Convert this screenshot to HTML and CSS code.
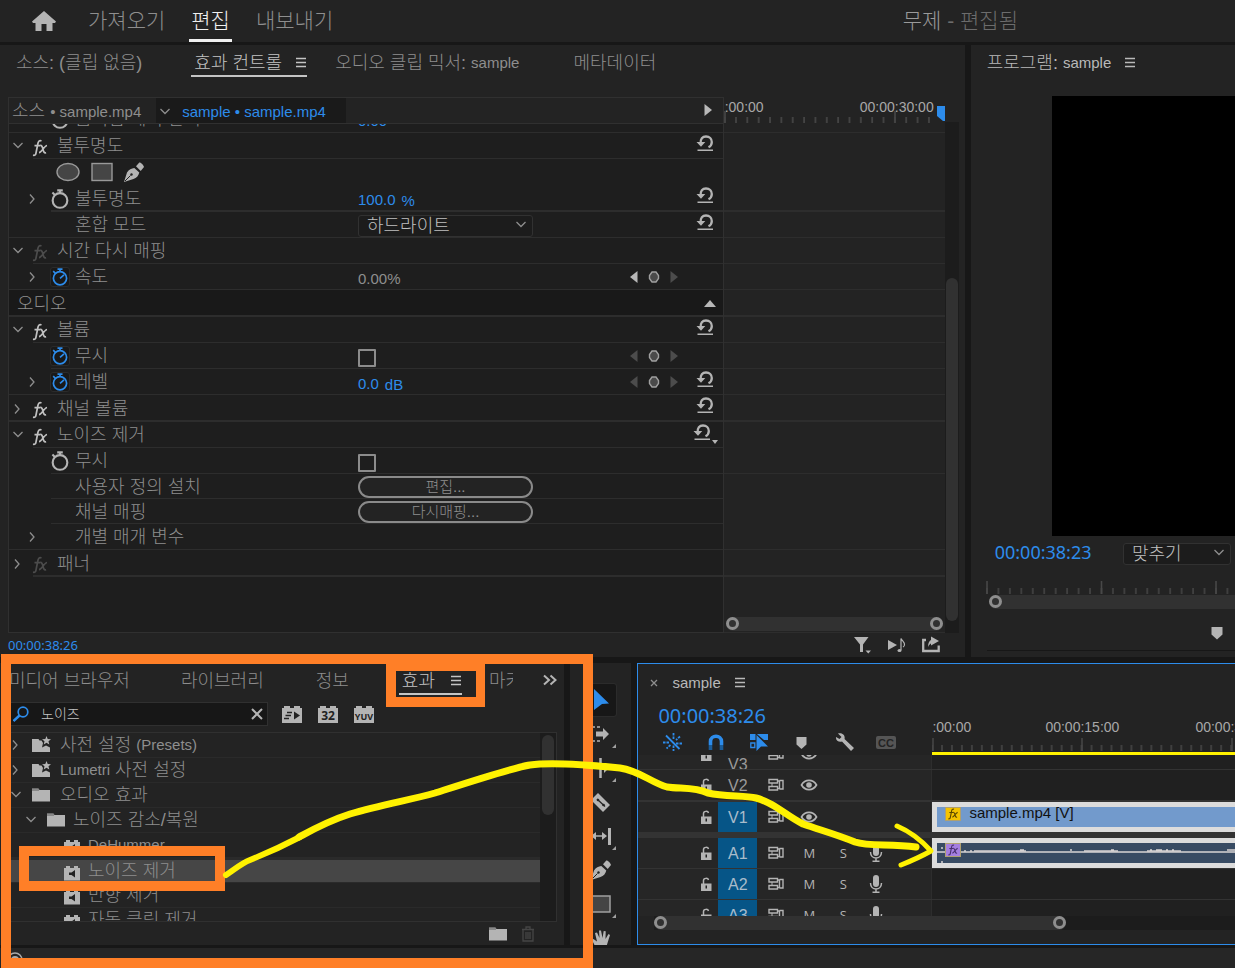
FILE: index.html
```html
<!DOCTYPE html>
<html lang="ko">
<head>
  <meta charset="UTF-8" />
  <meta name="viewport" content="width=device-width, initial-scale=1.0"/>
  <title>무제 - 편집됨</title>
  <link rel="stylesheet" href="styles.css">
</head>
<body>
  <!-- Icons -->
  <svg class="sprite" aria-hidden="true">
    <symbol id="i-down" viewBox="0 0 12 12"><path d="M1.500 3 6 7.500 10.500 3" fill="none" stroke="currentColor" stroke-width="1.300"/></symbol>
    <symbol id="i-right" viewBox="0 0 12 12"><path d="M3 1.500 7 6l-4 4.500" fill="none" stroke="currentColor" stroke-width="1.300"/></symbol>
    <symbol id="i-menu" viewBox="0 0 12 12"><path d="M1 1.500h10M1 5.500h10M1 9.500h10" stroke="currentColor" stroke-width="1.300"/></symbol>
    <symbol id="i-fx" viewBox="0 0 16 18"><path d="M9.500 2C7.300 1 6.300 2.500 5.900 4.500L4 14c-.3 1.800-1 2.600-3 2.200M2.500 6.700h5.600M8.200 6.500c1.700-.4 2.100 1 2.700 3.200.6 2.800 1.100 4.600 3.200 4M15 6.500c-2.300.3-5.600 6.900-8 7.200" fill="none" stroke="currentColor" stroke-width="1.700"/></symbol>
    <symbol id="i-watch" viewBox="0 0 18 18"><circle cx="9" cy="10.300" r="6.600" fill="none" stroke="currentColor" stroke-width="1.900"/><path d="M6.500 1.200h5M9 1v3M2.200 3.200l2.200 2.100" fill="none" stroke="currentColor" stroke-width="1.900"/></symbol>
    <symbol id="i-watch-on" viewBox="0 0 18 18"><circle cx="9" cy="10.300" r="6.600" fill="none" stroke="currentColor" stroke-width="1.700"/><path d="M6.500 1.200h5M9 1v3M2.200 3.200l2.200 2.100M9 10.300l4-3.500" fill="none" stroke="currentColor" stroke-width="1.700"/></symbol>
    <symbol id="i-reset" viewBox="0 0 18 17"><path d="M4.700 8.500C4.200 4 6.500 1.500 10 1.500c3.500 0 5.800 2.300 5.800 5.500 0 2.400-1 4.200-3.300 5.300" fill="none" stroke="currentColor" stroke-width="2.300"/><path d="M.5 7h8.800L5 11.800zM1.500 14.500h15.500V16H1.500z" fill="currentColor"/></symbol>
    <symbol id="i-prev" viewBox="0 0 10 14"><path d="M8.500 1v12L1 7z" fill="currentColor"/></symbol>
    <symbol id="i-next" viewBox="0 0 10 14"><path d="M1.500 1v12L9 7z" fill="currentColor"/></symbol>
    <symbol id="i-key" viewBox="0 0 12 14"><path d="M4 2h4l2.500 3.500v3L8 12H4L1.500 8.500v-3z" fill="#4a4a4a" stroke="#a0a0a0" stroke-width="1.400"/></symbol>
    <symbol id="i-pen" viewBox="0 0 20 20"><path d="M0 20 3 10.500C5 7.500 7.500 6.500 10.300 6l5 4.500C14.500 14 12.500 16 9.500 17zM12 4.300 15.300.500C17 .3 19.500 3 20 5l-3.300 4z" fill="currentColor"/><path d="m1 19 5.500-5.500" stroke="#222" stroke-width="1"/><circle cx="7.500" cy="12.500" r="1.200" fill="#222"/></symbol>
    <symbol id="i-folder" viewBox="0 0 20 18"><path d="M1 2.500h6.500l1 1.500H19v11.500H1z" fill="currentColor"/><path d="M1 4h7" stroke="#222" stroke-width=".6"/></symbol>
    <symbol id="i-preset" viewBox="0 0 20 18"><path d="M1 3h6.500l1 1.500h2L12 7l-1 4.500 4-2 4 2V16H1z" fill="currentColor"/><path d="m15.500 0 1.200 3 3.300.200-2.500 2.100.8 3.200-2.800-1.800-2.800 1.800.8-3.200L11 3.200l3.300-.2z" fill="currentColor"/></symbol>
    <symbol id="i-brick" viewBox="0 0 16 16"><path d="M0 3h2V1h4v2h4V1h4v2h2v12.500H0z" fill="currentColor"/><path d="M11 5v7.500L7.500 10H5V7.500h2.500z" fill="#222"/></symbol>
    <symbol id="i-lock" viewBox="0 0 12 14"><path d="M1 6.500h10.500V14H1z" fill="currentColor"/><path d="M3.500 7V3.500c0-2.600 4.500-2.900 5-.5" fill="none" stroke="currentColor" stroke-width="1.500"/><path d="M5.500 8.500h1.500v3H5.500z" fill="#222"/></symbol>
    <symbol id="i-sync" viewBox="0 0 16 14"><path d="M1 1.500h8.500v3.500H1zM1 8.500h8.500V12H1zM9.500 3h2v7.500h-2M11.500 2.500H15v8.500h-3.500" fill="none" stroke="currentColor" stroke-width="1.400"/><path d="M4 5v3.500" stroke="currentColor"/></symbol>
    <symbol id="i-eye" viewBox="0 0 18 12"><path d="M1.500 6C5-.1 13-.1 16.500 6 13 12.100 5 12.100 1.500 6z" fill="none" stroke="currentColor" stroke-width="1.700"/><circle cx="9" cy="6" r="2.800" fill="currentColor"/></symbol>
    <symbol id="i-mic" viewBox="0 0 14 18"><rect x="4" y="0" width="6" height="12" rx="3" fill="currentColor"/><path d="M1.500 8c0 8 11 8 11 0M7 14v3.200M3.500 17.200h7" fill="none" stroke="currentColor" stroke-width="1.500"/></symbol>
    <symbol id="i-marker" viewBox="0 0 12 14"><path d="M.5 1h11v7.500L6 13.500.5 8.500z" fill="currentColor"/></symbol>
  </svg>

  <header class="topbar">
    <a class="home" href="#" aria-label="홈"><svg viewBox="0 0 24 20"><path d="M12 0 24 10.500l-1 1.500h-2.500v8h-6v-7h-5v7h-6v-8H1L0 10.500z" fill="currentColor"/></svg></a>
    <nav class="modes">
      <a href="#">가져오기</a>
      <a href="#" class="active">편집</a>
      <a href="#">내보내기</a>
    </nav>
    <div class="doc-title">무제 <span>- 편집됨</span></div>
  </header>

  <main class="workspace">
    <!-- Effect controls -->
    <section class="panel controls">
      <div class="tabs">
        <button class="tab tab-source">소스: (클립 없음)</button>
        <button class="tab active tab-controls">효과 컨트롤 <svg class="menu"><use href="#i-menu"/></svg></button>
        <button class="tab tab-mixer">오디오 클립 믹서: <span class="en">sample</span></button>
        <button class="tab tab-meta">메타데이터</button>
      </div>

      <div class="controls-body">
        <div class="props">
          <div class="clip-bar">
            <span class="clip-source">소스 <span class="en">• sample.mp4</span></span>
            <button class="clip-seq"><svg class="chev"><use href="#i-down"/></svg><span class="en">sample • sample.mp4</span></button>
            <svg class="next"><use href="#i-next"/></svg>
          </div>
          <div class="rows">
            <div class="row peek">
              <div class="name l1"><i class="chev"></i><svg class="watch"><use href="#i-watch"/></svg>움직임 제어 관리</div>
              <span class="num">0.00</span>
              <button class="reset" aria-label="재설정"><svg><use href="#i-reset"/></svg></button>
            </div>
            <div class="row from-fx">
              <div class="name"><svg class="chev"><use href="#i-down"/></svg><svg class="fx"><use href="#i-fx"/></svg>불투명도</div>
              <button class="reset" aria-label="재설정"><svg><use href="#i-reset"/></svg></button>
            </div>
            <div class="row plain masks">
              <svg viewBox="0 0 24 20"><ellipse cx="12" cy="10" rx="11" ry="8.500" fill="#454545" stroke="#999" stroke-width="1.400"/></svg>
              <svg viewBox="0 0 24 20"><rect x="2" y="1.500" width="20" height="17" fill="#454545" stroke="#999" stroke-width="1.400"/></svg>
              <svg class="pen"><use href="#i-pen"/></svg>
            </div>
            <div class="row thick from-name">
              <div class="name l1"><svg class="chev"><use href="#i-right"/></svg><svg class="watch"><use href="#i-watch"/></svg>불투명도</div>
              <span class="num">100.0</span><span class="num unit">%</span>
              <button class="reset" aria-label="재설정"><svg><use href="#i-reset"/></svg></button>
            </div>
            <div class="row">
              <label class="name l1" for="blend"><i class="chev"></i><i class="watch"></i>혼합 모드</label>
              <span class="select"><select id="blend"><option>하드라이트</option></select><svg class="chev"><use href="#i-down"/></svg></span>
              <button class="reset" aria-label="재설정"><svg><use href="#i-reset"/></svg></button>
            </div>
            <div class="row from-fx">
              <div class="name"><svg class="chev"><use href="#i-down"/></svg><svg class="fx off"><use href="#i-fx"/></svg>시간 다시 매핑</div>
            </div>
            <div class="row">
              <div class="name l1"><svg class="chev"><use href="#i-right"/></svg><svg class="watch on"><use href="#i-watch-on"/></svg>속도</div>
              <span class="num still">0.00%</span>
              <span class="keys no-reset"><svg class="lit"><use href="#i-prev"/></svg><svg class="key"><use href="#i-key"/></svg><svg><use href="#i-next"/></svg></span>
            </div>
            <div class="row thick section">
              <div class="name">오디오</div>
              <svg class="up" viewBox="0 0 12 7"><path d="M0 7h12L6 0z" fill="currentColor"/></svg>
            </div>
            <div class="row from-fx">
              <div class="name"><svg class="chev"><use href="#i-down"/></svg><svg class="fx"><use href="#i-fx"/></svg>볼륨</div>
              <button class="reset" aria-label="재설정"><svg><use href="#i-reset"/></svg></button>
            </div>
            <div class="row from-name">
              <label class="name l1" for="bypass-volume"><i class="chev"></i><svg class="watch on"><use href="#i-watch-on"/></svg>무시</label>
              <input type="checkbox" id="bypass-volume">
              <span class="keys no-reset"><svg><use href="#i-prev"/></svg><svg class="key"><use href="#i-key"/></svg><svg><use href="#i-next"/></svg></span>
            </div>
            <div class="row">
              <div class="name l1"><svg class="chev"><use href="#i-right"/></svg><svg class="watch on"><use href="#i-watch-on"/></svg>레벨</div>
              <span class="num">0.0</span><span class="num unit">dB</span>
              <span class="keys"><svg><use href="#i-prev"/></svg><svg class="key"><use href="#i-key"/></svg><svg><use href="#i-next"/></svg></span>
              <button class="reset" aria-label="재설정"><svg><use href="#i-reset"/></svg></button>
            </div>
            <div class="row thick">
              <div class="name"><svg class="chev"><use href="#i-right"/></svg><svg class="fx"><use href="#i-fx"/></svg>채널 볼륨</div>
              <button class="reset" aria-label="재설정"><svg><use href="#i-reset"/></svg></button>
            </div>
            <div class="row from-fx">
              <div class="name"><svg class="chev"><use href="#i-down"/></svg><svg class="fx"><use href="#i-fx"/></svg>노이즈 제거</div>
              <button class="reset more" aria-label="재설정"><svg><use href="#i-reset"/></svg><svg class="caret" viewBox="0 0 6 4"><path d="M0 0h6L3 4z" fill="currentColor"/></svg></button>
            </div>
            <div class="row from-name">
              <label class="name l1" for="bypass-noise"><i class="chev"></i><svg class="watch"><use href="#i-watch"/></svg>무시</label>
              <input type="checkbox" id="bypass-noise">
            </div>
            <div class="row short from-name">
              <div class="name l1"><i class="chev"></i><i class="watch"></i>사용자 정의 설치</div>
              <button class="pill">편집...</button>
            </div>
            <div class="row short from-name">
              <div class="name l1"><i class="chev"></i><i class="watch"></i>채널 매핑</div>
              <button class="pill">다시매핑...</button>
            </div>
            <div class="row">
              <div class="name l1"><svg class="chev"><use href="#i-right"/></svg><i class="watch"></i>개별 매개 변수</div>
            </div>
            <div class="row thick from-fx">
              <div class="name"><svg class="chev"><use href="#i-right"/></svg><svg class="fx off"><use href="#i-fx"/></svg>패너</div>
            </div>
          </div>
        </div>

        <div class="lanes">
          <div class="mini-ruler">
            <span>:00:00</span><span>00:00:30:00</span>
            <svg class="ticks"><defs><pattern id="t1" x="11" width="11.35" height="12" patternUnits="userSpaceOnUse"><path d="M1 6v6" stroke="#444" stroke-width="1.800"/></pattern></defs><rect width="212" height="12" fill="url(#t1)"/><path d="M1 0v12M171 0v12" stroke="#444" stroke-width="1.800"/></svg>
            <svg class="playhead" viewBox="0 0 8 15"><path d="M0 0h8v15H6l-6-5z" fill="#2d8ceb"/></svg>
          </div>
          <div class="lane-list">
            <div class="row peek"></div><div class="row plain"></div><div class="row plain"></div>
            <div class="row thick"></div><div class="row"></div><div class="row"></div><div class="row"></div>
            <div class="row thick"></div><div class="row"></div><div class="row"></div><div class="row"></div>
            <div class="row thick"></div><div class="row plain"></div><div class="row"></div>
            <div class="row short plain"></div><div class="row short plain"></div><div class="row"></div><div class="row thick"></div>
          </div>
          <div class="zoombar"><i></i><i></i></div>
        </div>
        <div class="vscroll"><i></i></div>
      </div>

      <div class="controls-foot">
        <span class="timecode small">00:00:38:26</span>
        <svg viewBox="0 0 18 18"><path d="M0 1h14.500L9 8.500V16H6V8.500zM11.500 14.500H17l-2.700 3z" fill="currentColor"/></svg>
        <svg viewBox="0 0 18 18"><path d="M0 4v10l9-5z" fill="currentColor"/><path d="M13 14V2.500c1 2.500 4 3.500 3.500 6.500-.2 1-.7 1.500-1.500 2" fill="none" stroke="currentColor" stroke-width="1.200"/><ellipse cx="11.500" cy="14.500" rx="2" ry="1.500" fill="currentColor"/></svg>
        <svg viewBox="0 0 18 18"><path d="M4 4H1.200V15h15.500V9.500" fill="none" stroke="currentColor" stroke-width="2.300"/><path d="M9 .5 17 5 9 9.500V7.500C8.500 7.500 7 9 6 11c0-4 1.500-6.500 3-7z" fill="currentColor"/></svg>
      </div>
    </section>

    <!-- Program monitor -->
    <section class="panel program">
      <div class="tabs">
        <button class="tab lit">프로그램: <span class="en">sample</span> <svg class="menu"><use href="#i-menu"/></svg></button>
      </div>
      <div class="screen"></div>
      <div class="program-bar">
        <span class="timecode mid">00:00:38:23</span>
        <span class="select"><select aria-label="확대/축소"><option>맞추기</option></select><svg class="chev"><use href="#i-down"/></svg></span>
      </div>
      <svg class="program-ruler"><defs><pattern id="t2" width="11.45" height="14" patternUnits="userSpaceOnUse"><path d="M1 7v6" stroke="#444" stroke-width="1.600"/></pattern></defs><rect width="100%" height="14" fill="url(#t2)"/><path d="M1 0v13M115.500 0v13M230 0v13" stroke="#484848" stroke-width="1.600"/></svg>
      <div class="zoombar open"><i></i></div>
      <div class="program-foot"><svg><use href="#i-marker"/></svg></div>
    </section>
  </main>

  <div class="workspace-bottom">
    <!-- Effects browser -->
    <section class="panel effects">
      <div class="tabs">
        <button class="tab t-media">미디어 브라우저</button>
        <button class="tab t-lib">라이브러리</button>
        <button class="tab t-info">정보</button>
        <button class="tab active t-fx">효과 <svg class="menu"><use href="#i-menu"/></svg></button>
        <button class="tab t-marker">마커</button>
        <svg class="more-tabs" viewBox="0 0 14 12"><path d="m1 1.500 5 4.500-5 4.500M7.500 1.500l5 4.500-5 4.500" fill="none" stroke="currentColor" stroke-width="2"/></svg>
      </div>
      <div class="search-row">
        <div class="search">
          <svg class="glass" viewBox="0 0 16 16"><circle cx="10" cy="6" r="4.800" fill="none" stroke="#2d8ceb" stroke-width="1.700"/><path d="m6.500 9.500-6 5.500" stroke="#2d8ceb" stroke-width="2.400"/></svg>
          <input type="text" aria-label="효과 검색" value="노이즈">
          <svg class="clear" viewBox="0 0 12 12"><path d="m1 1 10 10M11 1 1 11" stroke="currentColor" stroke-width="2"/></svg>
        </div>
        <svg class="badge" viewBox="0 0 20 17"><path d="M0 2h2V0h6v2h4V0h6v2h2v15H0z" fill="currentColor"/><path d="M12 5.500v8l6-4z" fill="#222"/><path d="M5 6.500h5M3.500 9.500H9M2 12.500h5" stroke="#222" stroke-width="1.300"/></svg>
        <svg class="badge" viewBox="0 0 20 17"><path d="M0 2h2V0h6v2h4V0h6v2h2v15H0z" fill="currentColor"/><text x="10" y="14" text-anchor="middle" font-size="12">32</text></svg>
        <svg class="badge" viewBox="0 0 20 17"><path d="M0 2h2V0h6v2h4V0h6v2h2v15H0z" fill="currentColor"/><text x="10" y="13.500" text-anchor="middle" font-size="9">YUV</text></svg>
      </div>
      <div class="tree-wrap">
        <div class="tree">
          <div class="leaf"><svg class="chev"><use href="#i-right"/></svg><svg class="folder"><use href="#i-preset"/></svg>사전 설정&nbsp;<span class="en">(Presets)</span></div>
          <div class="leaf"><svg class="chev"><use href="#i-right"/></svg><svg class="folder"><use href="#i-preset"/></svg><span class="en">Lumetri</span>&nbsp;사전 설정</div>
          <div class="leaf"><svg class="chev"><use href="#i-down"/></svg><svg class="folder"><use href="#i-folder"/></svg>오디오 효과</div>
          <div class="leaf d1"><svg class="chev"><use href="#i-down"/></svg><svg class="folder"><use href="#i-folder"/></svg>노이즈 감소/복원</div>
          <div class="leaf d2"><svg class="brick"><use href="#i-brick"/></svg><span class="en">DeHummer</span></div>
          <div class="leaf d2 selected"><svg class="brick"><use href="#i-brick"/></svg>노이즈 제거</div>
          <div class="leaf d2"><svg class="brick"><use href="#i-brick"/></svg>반향 제거</div>
          <div class="leaf d2"><svg class="brick"><use href="#i-brick"/></svg>자동 클릭 제거</div>
        </div>
        <div class="vscroll"><i></i></div>
      </div>
      <div class="effects-foot">
        <svg class="folder"><use href="#i-folder"/></svg>
        <svg class="trash" viewBox="0 0 14 16"><path d="M1 3.500h12M5 3V1h4v2M2 3.500V15h10V3.500M5 6v7M7 6v7M9 6v7" fill="none" stroke="currentColor" stroke-width="1.300"/></svg>
      </div>
    </section>

    <!-- Tools -->
    <section class="panel tools">
      <button class="active" aria-label="선택"><svg viewBox="0 0 20 22"><path d="M3 0 18 14.500 11 15 3 21z" fill="currentColor"/></svg></button>
      <button class="sub" aria-label="트랙 선택"><svg viewBox="0 0 20 22"><path d="M5 8.500h7V5l6 6-6 6v-3.500H5z" fill="currentColor"/><path d="M1 4h8M1 18h8M1 4v14" fill="none" stroke="currentColor" stroke-width="1.600" stroke-dasharray="3 2"/></svg></button>
      <button class="sub" aria-label="잔물결 편집"><svg viewBox="0 0 20 22"><path d="M9.500 1v20" stroke="currentColor" stroke-width="2.500"/><path d="M7.500 11H1M12 11h6" stroke="currentColor" stroke-width="1.500"/><path d="m13 6 5 5-5 5z" fill="currentColor"/></svg></button>
      <button aria-label="자르기"><svg viewBox="0 0 20 22"><path d="M7 2 19 14l-7 7L0 9z" fill="currentColor"/><path d="m6 8 8 7.500" stroke="#222" stroke-width="1.300"/><circle cx="7" cy="9" r="1.300" fill="#222"/><circle cx="12.500" cy="14" r="1.300" fill="#222"/></svg></button>
      <button class="sub" aria-label="밀어넣기"><svg viewBox="0 0 20 22"><path d="M18.500 3v17" stroke="currentColor" stroke-width="3"/><path d="M2 11h13" stroke="currentColor" stroke-width="1.500"/><path d="M11 7v8l5-4zM5 7v8l-5-4z" fill="currentColor"/></svg></button>
      <button aria-label="펜"><svg><use href="#i-pen"/></svg></button>
      <button class="sub" aria-label="사각형"><svg viewBox="0 0 20 22"><rect x="0" y="3" width="19" height="16" fill="#454545" stroke="#a0a0a0" stroke-width="1.500"/></svg></button>
      <button aria-label="손"><svg viewBox="0 0 20 22"><path d="M5 21 1 13l1.500-1L6 14.500 4 6l2-.500L8.500 11 8 3.500h2L11.500 11l1.200-7 2 .3L14.500 12l3-5 1.500 1-2.500 8-1.500 5z" fill="currentColor"/></svg></button>
    </section>

    <!-- Timeline -->
    <section class="panel timeline">
      <div class="timeline-tab">
        <svg class="close" viewBox="0 0 8 8"><path d="m1 1 6 6M7 1 1 7" stroke="currentColor" stroke-width="1.300"/></svg>
        <button class="tab lit"><span class="en">sample</span> <svg class="menu"><use href="#i-menu"/></svg></button>
      </div>
      <div class="timeline-top">
        <div class="timeline-tools">
          <span class="timecode big">00:00:38:26</span>
          <div class="toolbar">
            <svg class="blue" viewBox="0 0 20 18"><path d="M3 2.500 16.500 16" stroke="currentColor" stroke-width="1.800"/><path d="M10.500 0v6.500M10.500 12.500V18M0 9.500h7M13 10.500h7M17 3.500 13 7M7.500 12 3.500 15.500" stroke="currentColor" stroke-width="1.800" stroke-dasharray="2.500 1"/></svg>
            <svg class="blue" viewBox="0 0 20 18"><path d="M4.500 12V8.500c0-7 11-7 11 0V12" fill="none" stroke="currentColor" stroke-width="3.600"/><path d="M4.500 12v5M15.500 12v5" stroke="#1b5c98" stroke-width="3.600"/></svg>
            <svg class="blue" viewBox="0 0 20 18"><path d="M1 1h5.500v6H1zM8 1h11v6h-4L9 2z" fill="currentColor"/><path d="M1.800 10h4v4.500h-4z" fill="none" stroke="currentColor" stroke-width="1.300"/><path d="M7.500 2v16l4.500-4.500h7z" fill="currentColor"/></svg>
            <svg viewBox="0 0 20 18"><path d="M4.500 4h10v7.500l-5 4.500-5-4.500z" fill="currentColor"/></svg>
            <svg viewBox="0 0 20 18"><path d="M3 .500c4-1 7.500 1.500 6.500 5.500L19 15l-3 3-9-9.500C4 9.500 .5 7.500 1 4l3.500 2L6.500 4z" fill="currentColor"/></svg>
            <svg class="cc" viewBox="0 0 20 18"><rect x="0" y="3" width="20" height="13" rx="2" fill="#555"/><text x="10" y="13.500" text-anchor="middle" font-size="11">CC</text></svg>
          </div>
        </div>
        <div class="time-ruler">
          <div class="marks"><span>:00:00</span><span>00:00:15:00</span><span>00:00:30:00</span></div>
          <svg class="ticks"><defs><pattern id="t3" x="9" width="9.970" height="14" patternUnits="userSpaceOnUse"><path d="M1 7v6" stroke="#484848" stroke-width="1.500"/></pattern></defs><rect width="100%" height="14" fill="url(#t3)"/><path d="M1 0v13M150 0v13M300 0v13" stroke="#484848" stroke-width="1.500"/></svg>
          <div class="work-area"></div>
        </div>
      </div>

      <div class="tracks">
        <div class="track cut">
          <div class="head"><svg class="lock"><use href="#i-lock"/></svg><b>V3</b><svg class="sync"><use href="#i-sync"/></svg><svg class="eye"><use href="#i-eye"/></svg></div>
          <div class="clips"></div>
        </div>
        <div class="track gap">
          <div class="head"><svg class="lock"><use href="#i-lock"/></svg><b>V2</b><svg class="sync"><use href="#i-sync"/></svg><svg class="eye"><use href="#i-eye"/></svg></div>
          <div class="clips"></div>
        </div>
        <div class="track split">
          <div class="head"><svg class="lock"><use href="#i-lock"/></svg><b class="on">V1</b><svg class="sync"><use href="#i-sync"/></svg><svg class="eye"><use href="#i-eye"/></svg></div>
          <div class="clips"><div class="clip video"><span class="fx-badge"><svg><use href="#i-fx"/></svg></span><span class="en">sample.mp4 [V]</span></div></div>
        </div>
        <div class="track">
          <div class="head"><svg class="lock"><use href="#i-lock"/></svg><b class="on">A1</b><svg class="sync"><use href="#i-sync"/></svg><span class="ms">M</span><span class="ms">S</span><svg class="mic"><use href="#i-mic"/></svg></div>
          <div class="clips"><div class="clip audio"><span class="fx-badge"><svg><use href="#i-fx"/></svg></span><svg class="wave"><path d="M0 9h400" stroke="#d8d4d4" stroke-width="1.500"/><path d="M27 8h2M33 8h2M37 8h52M83 7h4M133 7h2M147 8h34M174 7h3M210 8h34M213 7h2M219 7h6M229 7h2M235 7h2M290 7h8M4 5h2M4 19h2" stroke="#d8d4d4" stroke-width="1.500"/></svg></div></div>
        </div>
        <div class="track">
          <div class="head"><svg class="lock"><use href="#i-lock"/></svg><b class="on">A2</b><svg class="sync"><use href="#i-sync"/></svg><span class="ms">M</span><span class="ms">S</span><svg class="mic"><use href="#i-mic"/></svg></div>
          <div class="clips"></div>
        </div>
        <div class="track">
          <div class="head"><svg class="lock"><use href="#i-lock"/></svg><b class="on">A3</b><svg class="sync"><use href="#i-sync"/></svg><span class="ms">M</span><span class="ms">S</span><svg class="mic"><use href="#i-mic"/></svg></div>
          <div class="clips"></div>
        </div>
      </div>
      <div class="timeline-scroll"><div class="zoombar"><i></i><i></i></div></div>
    </section>
  </div>

  <footer class="status"><svg viewBox="0 0 16 16"><circle cx="8" cy="8" r="7" fill="none" stroke="#aaa" stroke-width="1.500"/><circle cx="8" cy="8" r="4" fill="#aaa"/></svg></footer>

  <!-- Callouts over the panels -->
  <svg class="callouts" width="1235" height="968" aria-hidden="true">
    <g fill="none" stroke="#ff7f27" stroke-width="10">
      <rect x="6" y="659" width="582" height="304"/>
      <rect x="24" y="851" width="196" height="35"/>
    </g>
    <path d="M386 661h99v46h-99zM396 671v26h80v-26z" fill="#ff7f27" fill-rule="evenodd"/>
    <g fill="none" stroke="#fff200" stroke-linecap="round" stroke-linejoin="round">
      <path d="M226 875C235 869 242 863 250 860 270 852 281 847 300 837" stroke-width="6"/>
      <path d="M299 837C312 830 328 821 350 814 380 805 410 800 435 793 460 785 515 767 530 765 550 762 590 765 620 768 640 771 650 782 667 787 680 789 695 787 708 793 725 797 745 795 756 798 775 803 785 815 803 824 820 830 835 834 855 842 870 847 890 843 916 847" stroke-width="7"/>
      <path d="M897 826c14 6 26 16 34 25-9 5-20 10-30 14" stroke-width="5"/>
    </g>
  </svg>
</body>
</html>
```

FILE: styles.css
```css
* {
  box-sizing: border-box;
}

body {
  margin: 0;
  min-height: 100vh;
  display: flex;
  flex-direction: column;
  position: relative;
  overflow: hidden;
  background: #171717;
  color: #8e8e8e;
  font-family: "Liberation Sans", "Noto Sans CJK KR", sans-serif;
  font-size: 18px;
  font-weight: 300;
  line-height: 24px;
}

button, input, select {
  margin: 0;
  padding: 0;
  border: none;
  background: none;
  color: inherit;
  font: inherit;
}

a {
  color: inherit;
  text-decoration: none;
}

svg {
  display: block;
  flex: none;
}

.sprite {
  position: absolute;
  width: 0;
  height: 0;
}

.en {
  font-size: 15px;
}

.menu {
  width: 12px;
  height: 12px;
}

.chev {
  width: 12px;
  height: 12px;
  flex: none;
}

/* top bar */
.topbar {
  height: 45px;
  display: flex;
  background: #232323;
  border-bottom: 3px solid #171717;
  font-size: 21px;
  line-height: 42px;
  padding-left: 32px;
}

.home {
  padding-top: 11px;
  color: #b4b4b4;
}

.home svg {
  width: 24px;
  height: 20px;
}

.modes {
  display: flex;
  gap: 22px;
  margin-left: 30px;
}

.modes a {
  padding: 0 2px;
}

.modes .active {
  color: #f0f0f0;
  border-bottom: 3px solid #f0f0f0;
}

.doc-title {
  margin-left: auto;
  margin-right: 217px;
  color: #9a9a9a;
}

.doc-title span {
  color: #6c6c6c;
}

/* panels */
.panel {
  background: #232323;
  min-width: 0;
  overflow: hidden;
}

.workspace {
  flex: 1;
  display: grid;
  grid-template-columns: minmax(0, 73fr) minmax(0, 20fr);
  gap: 6px;
  margin-bottom: 6px;
}

.workspace-bottom {
  height: 282px;
  display: grid;
  grid-template-columns: minmax(0, 17fr) 61px minmax(0, 18fr);
  gap: 6px;
  margin-bottom: 3px;
}

.tabs {
  display: flex;
  align-items: flex-start;
  white-space: nowrap;
}

.tab {
  display: flex;
  align-items: center;
  white-space: pre;
  height: 26px;
  border-bottom: 2px solid transparent;
}

.tab .menu {
  margin-left: 8px;
}

.tab.lit {
  color: #b9b9b9;
}

.tab.active {
  color: #c4c4c4;
  border-bottom-color: #c4c4c4;
}

/* effect controls */
.controls {
  display: flex;
  flex-direction: column;
  padding: 6px 6px 0 8px;
}

.controls .tabs {
  height: 46px;
  padding-left: 8px;
}

.tab-controls {
  margin-left: 49px;
  padding-left: 3px;
}

.tab-mixer {
  margin-left: 28px;
}

.tab-meta {
  margin-left: 54px;
}

.controls-body {
  flex: 1;
  display: grid;
  grid-template-columns: minmax(0, 1fr) 221px 14px;
  min-height: 0;
}

.props {
  background: #1e1e1e;
  border: 1px solid #303030;
}

.clip-bar {
  display: flex;
  height: 26px;
  background: #232323;
  border-bottom: 1px solid #303030;
}

.clip-source {
  padding: 1px 15px 0 3px;
}

.clip-seq {
  display: flex;
  align-items: center;
  gap: 11px;
  padding: 3px 20px 0 3px;
  background: #1a1a1a;
  color: #2d8ceb;
}

.clip-seq .chev {
  color: #8e8e8e;
}

.clip-bar .next {
  width: 10px;
  height: 14px;
  margin: 5px 10px 0 auto;
  color: #b8b8b8;
}

.row {
  display: flex;
  align-items: center;
  position: relative;
  height: 26px;
  white-space: nowrap;
}

.row::after {
  content: '';
  position: absolute;
  left: 0;
  right: 0;
  bottom: 0;
  height: 1px;
  background: #2d2d2d;
}

.from-fx::after {
  left: 24px;
}

.from-name::after {
  left: 42px;
}

.plain::after {
  display: none;
}

.thick {
  height: 27px;
}

.thick::after {
  height: 2px;
}

.short {
  height: 25px;
}

.peek {
  height: 9px;
  padding-bottom: 2px;
  align-items: flex-end;
  overflow: hidden;
}

.section {
  background: #191919;
}

.name {
  display: flex;
  align-items: center;
  width: 349px;
  padding-left: 3px;
}

.name.l1 {
  padding-left: 18px;
}

.section .name {
  padding-left: 8px;
}

.fx {
  width: 16px;
  height: 18px;
  margin: 3px 9px 0 8px;
  color: #c0c0c0;
}

.fx.off {
  color: #4c4c4c;
}

.watch {
  width: 20px;
  height: 20px;
  margin: 0 5px 0 11px;
  flex: none;
  color: #b4b4b4;
}

.watch.on {
  background: #191919;
  border: 1px solid #2b2b2b;
  border-radius: 3px;
  color: #2d8ceb;
}

.num {
  font-size: 15px;
  line-height: 20px;
  padding-top: 3px;
  color: #2d8ceb;
}

.num.still {
  color: #8e8e8e;
}

.num.unit {
  margin-left: 6px;
  padding-top: 5px;
}

.masks {
  padding-left: 47px;
  gap: 10px;
}

.masks svg {
  width: 24px;
  height: 20px;
}

.masks .pen {
  width: 20px;
  color: #b4b4b4;
}

.reset {
  display: flex;
  margin-left: auto;
  margin-right: 9px;
  height: 23px;
  color: #b4b4b4;
}

.reset svg {
  width: 18px;
  height: 17px;
}

.peek .reset {
  height: 24px;
}

.reset.more {
  margin-right: 5px;
}

.reset .caret {
  width: 6px;
  height: 4px;
  align-self: flex-end;
  margin: 0 0 3px 1px;
}

.keys {
  display: flex;
  gap: 9px;
  margin-left: auto;
  color: #4c4c4c;
}

.keys svg {
  width: 10px;
  height: 14px;
}

.keys .key {
  width: 12px;
}

.keys .lit {
  color: #b8b8b8;
}

.keys + .reset {
  margin-left: 17px;
}

.keys.no-reset {
  margin-right: 44px;
}

.up {
  width: 12px;
  height: 7px;
  margin-left: auto;
  margin-right: 7px;
  color: #b8b8b8;
}

.select {
  position: relative;
  width: 175px;
  height: 22px;
}

.select select {
  appearance: none;
  width: 100%;
  height: 22px;
  padding-left: 8px;
  border: 1px solid #313131;
  border-radius: 3px;
  background: #1c1c1c;
  color: #c0c0c0;
  line-height: 20px;
}

.select .chev {
  position: absolute;
  right: 6px;
  top: 5px;
  pointer-events: none;
}

input[type="checkbox"] {
  appearance: none;
  width: 18px;
  height: 18px;
  margin-top: 3px;
  border: 2px solid #8c8c8c;
  border-radius: 1px;
}

.pill {
  width: 175px;
  height: 22px;
  border: 2px solid #8a8a8a;
  border-radius: 11px;
  background: #232323;
  font-size: 15px;
  line-height: 18px;
}

.lanes {
  display: flex;
  flex-direction: column;
  border-bottom: 1px solid #2d2d2d;
}

.mini-ruler {
  position: relative;
  height: 27px;
  display: flex;
  justify-content: space-between;
  padding-right: 11px;
  padding-left: 1px;
  color: #a8a8a8;
  font-size: 14px;
  line-height: 21px;
}

.mini-ruler .ticks {
  position: absolute;
  left: 0;
  bottom: 1px;
  width: 212px;
  height: 12px;
}

.playhead {
  position: absolute;
  right: 0;
  top: 9px;
  width: 8px;
  height: 15px;
}

.lane-list {
  flex: 1;
}

.zoombar {
  display: flex;
  justify-content: space-between;
  height: 14px;
  border-radius: 7px;
  background: #313131;
}

.zoombar i {
  width: 13px;
  height: 13px;
  border: 3px solid #8e8e8e;
  border-radius: 50%;
}

.lanes .zoombar {
  margin: 0 2px 1px;
}

.vscroll {
  background: #1c1c1c;
}

.controls .vscroll {
  margin-top: 25px;
  padding: 156px 1px 12px;
}

.vscroll i {
  display: block;
  height: 100%;
  border-radius: 6px;
  background: #313131;
}

.controls-foot {
  display: flex;
  align-items: center;
  gap: 16px;
  height: 24px;
  padding-right: 19px;
  color: #b4b4b4;
}

.controls-foot svg {
  width: 18px;
  height: 18px;
}

.timecode {
  color: #2d8ceb;
  font-family: "Noto Sans", sans-serif;
  font-weight: 400;
}

.timecode.small {
  font-size: 13px;
  margin-right: auto;
}

.timecode.mid {
  font-size: 18px;
}

.timecode.big {
  font-size: 20px;
}

/* program monitor */
.program {
  display: flex;
  flex-direction: column;
  padding-top: 6px;
}

.program .tabs {
  height: 45px;
  padding-left: 16px;
}

.program .menu,
.timeline .menu {
  margin-left: 13px;
}

.screen {
  flex: 1;
  margin-left: 81px;
  background: #000;
}

.program-bar {
  display: flex;
  align-items: center;
  justify-content: space-between;
  height: 34px;
  padding: 0 4px 0 24px;
}

.program-bar .timecode {
  padding-bottom: 2px;
}

.program-bar .select {
  width: 108px;
}

.program-ruler {
  width: 100%;
  height: 14px;
  margin-top: 11px;
  padding-left: 15px;
}

.zoombar.open {
  margin-left: 18px;
  border-radius: 7px 0 0 7px;
}

.program-foot {
  display: flex;
  justify-content: flex-end;
  height: 42px;
  margin: 0 0 6px 16px;
  padding: 17px 12px 0 0;
  border-bottom: 1px solid #171717;
  color: #b4b4b4;
}

.program-foot svg {
  width: 12px;
  height: 14px;
}

/* effects browser */
.effects {
  display: flex;
  flex-direction: column;
  padding: 6px 7px 0 9px;
}

.effects .tabs {
  height: 33px;
}

.t-lib {
  margin-left: 51px;
}

.t-info {
  margin-left: 52px;
}

.t-fx {
  margin-left: 50px;
  padding-left: 3px;
}

.effects .menu {
  margin-left: 10px;
}

.t-marker {
  margin-left: 27px;
  width: 27px;
  overflow: hidden;
}

.more-tabs {
  width: 14px;
  height: 12px;
  margin: 5px 0 0 30px;
  color: #b4b4b4;
}

.search-row {
  display: flex;
  align-items: center;
  gap: 16px;
  height: 24px;
  color: #b4b4b4;
}

.search {
  display: flex;
  align-items: center;
  width: 259px;
  height: 24px;
  margin-right: -2px;
  padding: 0 4px 0 3px;
  border: 1px solid #303030;
  background: #171717;
}

.search input {
  flex: 1;
  min-width: 0;
  padding-left: 12px;
  color: #c4c4c4;
  font-size: 14px;
}

.glass {
  width: 16px;
  height: 16px;
}

.clear {
  width: 12px;
  height: 12px;
}

.badge {
  width: 20px;
  height: 17px;
}

.badge text {
  fill: #222;
  font-family: "Open Sans", sans-serif;
  font-weight: 700;
}

.tree-wrap {
  display: grid;
  grid-template-columns: minmax(0, 1fr) 16px;
  height: 190px;
  margin-top: 6px;
  border: 1px solid #303030;
  border-left: none;
}

.tree {
  overflow: hidden;
}

.leaf {
  display: flex;
  align-items: center;
  height: 25px;
  padding-left: 1px;
  border-bottom: 1px solid #2a2a2a;
  white-space: nowrap;
}

.leaf.d1 {
  padding-left: 16px;
}

.leaf.d2 {
  padding-left: 55px;
}

.leaf.selected {
  background: #464646;
  border-top: 2px solid #2a2a2a;
}

.folder {
  width: 20px;
  height: 18px;
  color: #b4b4b4;
}

.leaf .folder {
  margin: 0 9px 0 9px;
}

.leaf.d1 .folder {
  margin-right: 7px;
}

.brick {
  width: 16px;
  height: 16px;
  margin: 3px 8px 0 0;
  color: #b4b4b4;
}

.effects .vscroll {
  padding: 2px 2px 106px;
}

.effects-foot {
  display: flex;
  align-items: center;
  justify-content: flex-end;
  gap: 13px;
  height: 23px;
  padding-right: 22px;
}

.trash {
  width: 14px;
  height: 16px;
  color: #454545;
}

/* tools */
.tools {
  display: flex;
  flex-direction: column;
  align-items: center;
  padding-top: 20px;
  color: #b4b4b4;
}

.tools button {
  display: flex;
  flex: none;
  align-items: center;
  justify-content: center;
  width: 32px;
  height: 34px;
  position: relative;
}

.tools svg {
  width: 20px;
  height: 22px;
}

.tools .active {
  background: #171717;
  background-clip: padding-box;
  border: 1px solid #2b2b2b;
  border-radius: 3px;
  color: #2d8ceb;
}

.sub::after {
  content: '';
  position: absolute;
  right: 1px;
  bottom: 3px;
  border-left: 4px solid transparent;
  border-bottom: 4px solid #a0a0a0;
}

/* timeline */
.timeline {
  display: flex;
  flex-direction: column;
  border: 1px solid #2d8ceb;
  border-right: none;
}

.timeline-tab {
  display: flex;
  align-items: center;
  height: 38px;
  padding-left: 12px;
}

.timeline-tab .tab {
  margin-left: 14px;
  padding-top: 2px;
}

.close {
  width: 8px;
  height: 8px;
}

.timeline-top {
  display: grid;
  grid-template-columns: 294px minmax(0, 1fr);
  height: 53px;
}

.timeline-tools {
  padding-left: 20px;
}

.timeline-tools .timecode {
  display: block;
  line-height: 28px;
}

.toolbar {
  display: flex;
  gap: 23px;
  padding: 3px 0 0 5px;
  color: #b4b4b4;
}

.toolbar svg {
  width: 20px;
  height: 18px;
}

.toolbar .blue {
  color: #2d8ceb;
}

.toolbar text {
  fill: #232323;
  font-weight: 700;
}

.toolbar .cc {
  margin-left: -2px;
}

.time-ruler {
  display: flex;
  flex-direction: column;
  justify-content: flex-end;
  min-width: 0;
  overflow: hidden;
}

.marks {
  display: flex;
  color: #a8a8a8;
  font-size: 14px;
  line-height: 20px;
}

.marks span {
  flex: none;
  width: 150px;
}

.marks span:first-child {
  width: 113px;
}

.time-ruler .ticks {
  width: 100%;
  height: 14px;
  margin-top: 1px;
}

.work-area {
  height: 3px;
  background: #fff200;
}

.tracks {
  height: 161px;
  overflow: hidden;
}

.track {
  display: grid;
  grid-template-columns: 294px minmax(0, 1fr);
  height: 31px;
  border-bottom: 1px solid #333;
}

.track.gap {
  height: 32px;
  border-bottom-width: 2px;
}

.track.split {
  height: 36px;
  border-bottom-width: 6px;
}

.track.cut {
  height: 15px;
  grid-template-rows: 14px;
  align-items: end;
  overflow: hidden;
}

.head {
  display: flex;
  align-items: center;
  height: 30px;
  background: #262626;
  border-right: 1px solid #2d2d2d;
  color: #b4b4b4;
}

.head b {
  width: 39px;
  height: 30px;
  margin: 0 11px 0 6px;
  color: #9a9a9a;
  font-size: 16px;
  font-weight: 400;
  line-height: 32px;
  text-align: center;
}

.cut b {
  padding-top: 10px;
}

.head .on {
  background: #065587;
  color: #a9bccb;
}

.lock {
  width: 12px;
  height: 14px;
  margin-left: 62px;
}

.sync {
  width: 16px;
  height: 14px;
}

.eye {
  width: 18px;
  height: 12px;
  margin-left: 16px;
}

.ms {
  width: 34px;
  font-family: "Open Sans", sans-serif;
  font-size: 13px;
  font-weight: 400;
  text-align: center;
}

.sync + .ms {
  margin-left: 8px;
}

.mic {
  width: 14px;
  height: 18px;
  margin-left: 9px;
}

.clips {
  height: 100%;
  background: #202020;
}

.clip {
  display: flex;
  align-items: flex-start;
  height: 30px;
  border: 5px solid #dcdcdc;
  border-right: none;
  position: relative;
}

.video {
  background: #729acc;
  color: #111;
}

.audio {
  background: #384b63;
}

.clip .en {
  line-height: 12px;
  margin-left: 8px;
}

.fx-badge {
  position: relative;
  z-index: 1;
  width: 16px;
  height: 14px;
  margin-left: 8px;
  background: #f5c400;
  border: 1px solid #b0a070;
  color: #5a4800;
}

.audio .fx-badge {
  background: #a57fe0;
  color: #4a3070;
}

.fx-badge svg {
  width: 14px;
  height: 12px;
}

.wave {
  position: absolute;
  left: 0;
  top: 0;
  width: 100%;
  height: 20px;
}

.timeline-scroll {
  margin-left: 16px;
  background: #1c1c1c;
}

.timeline-scroll .zoombar {
  width: 412px;
}

/* status bar */
.status {
  height: 20px;
  padding: 4px 0 0 7px;
  background: #262626;
}

.status svg {
  width: 16px;
  height: 16px;
}

.callouts {
  position: absolute;
  left: 0;
  top: 0;
  pointer-events: none;
}
```
